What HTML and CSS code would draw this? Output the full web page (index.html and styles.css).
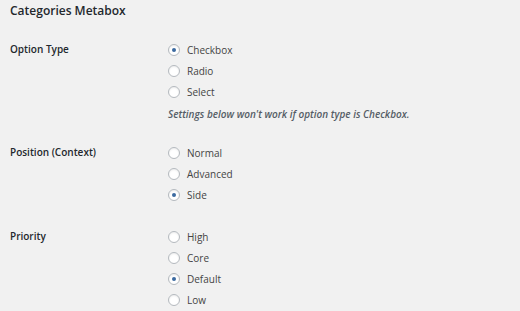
FILE: index.html
```html
<!DOCTYPE html>
<html lang="en">
<head>
  <meta charset="UTF-8">
  <title>Categories Metabox</title>
  <link rel="stylesheet" href="styles.css">
</head>
<body>
  <h2 class="box-title">Categories Metabox</h2>

  <div class="form-table">
    <div class="field">
      <div class="field-label">Option Type</div>
      <div class="field-input">
        <label class="radio"><input type="radio" name="type" checked><span>Checkbox</span></label>
        <label class="radio"><input type="radio" name="type"><span>Radio</span></label>
        <label class="radio"><input type="radio" name="type"><span>Select</span></label>
        <p class="description">Settings below won't work if option type is Checkbox.</p>
      </div>
    </div>

    <div class="field">
      <div class="field-label">Position (Context)</div>
      <div class="field-input">
        <label class="radio"><input type="radio" name="context"><span>Normal</span></label>
        <label class="radio"><input type="radio" name="context"><span>Advanced</span></label>
        <label class="radio"><input type="radio" name="context" checked><span>Side</span></label>
      </div>
    </div>

    <div class="field">
      <div class="field-label">Priority</div>
      <div class="field-input">
        <label class="radio"><input type="radio" name="priority"><span>High</span></label>
        <label class="radio"><input type="radio" name="priority"><span>Core</span></label>
        <label class="radio"><input type="radio" name="priority" checked><span>Default</span></label>
        <label class="radio"><input type="radio" name="priority"><span>Low</span></label>
      </div>
    </div>
  </div>
</body>
</html>
```

FILE: styles.css
```css
body {
  margin: 0;
  padding: 0 10px;
  background-color: #f1f1f1;
  font-family: "Open Sans", sans-serif;
  font-size: 10px;
  color: #444;
}

.box-title {
  margin: 0;
  padding-top: 3px;
  font-size: 12px;
  line-height: 16px;
  font-weight: 600;
  color: #23282d;
}

.form-table {
  padding-top: 20px;
}

.field {
  display: grid;
  grid-template-columns: 158px 1fr;
  padding-bottom: 17px;
}

.field + .field + .field {
  padding-top: 4px;
}

.field-label {
  font-weight: 600;
  color: #23282d;
  line-height: 21px;
}

.field-input {
  display: flex;
  flex-direction: column;
}

.radio {
  display: flex;
  align-items: center;
  gap: 7px;
  height: 21px;
}

.radio input {
  appearance: none;
  box-sizing: border-box;
  margin: 0;
  width: 12px;
  height: 12px;
  border: 1px solid #b4b9be;
  border-radius: 50%;
  background: #fff;
  box-shadow: inset 0 1px 2px rgba(0, 0, 0, 0.08);
  display: grid;
  place-items: center;
}

.radio input:checked::before {
  content: "";
  width: 4px;
  height: 4px;
  border-radius: 50%;
  background: #3b6aa0;
}

.description {
  margin: 2px 0 0;
  line-height: 21px;
  font-style: italic;
  font-weight: 600;
  color: #555d66;
}
```
